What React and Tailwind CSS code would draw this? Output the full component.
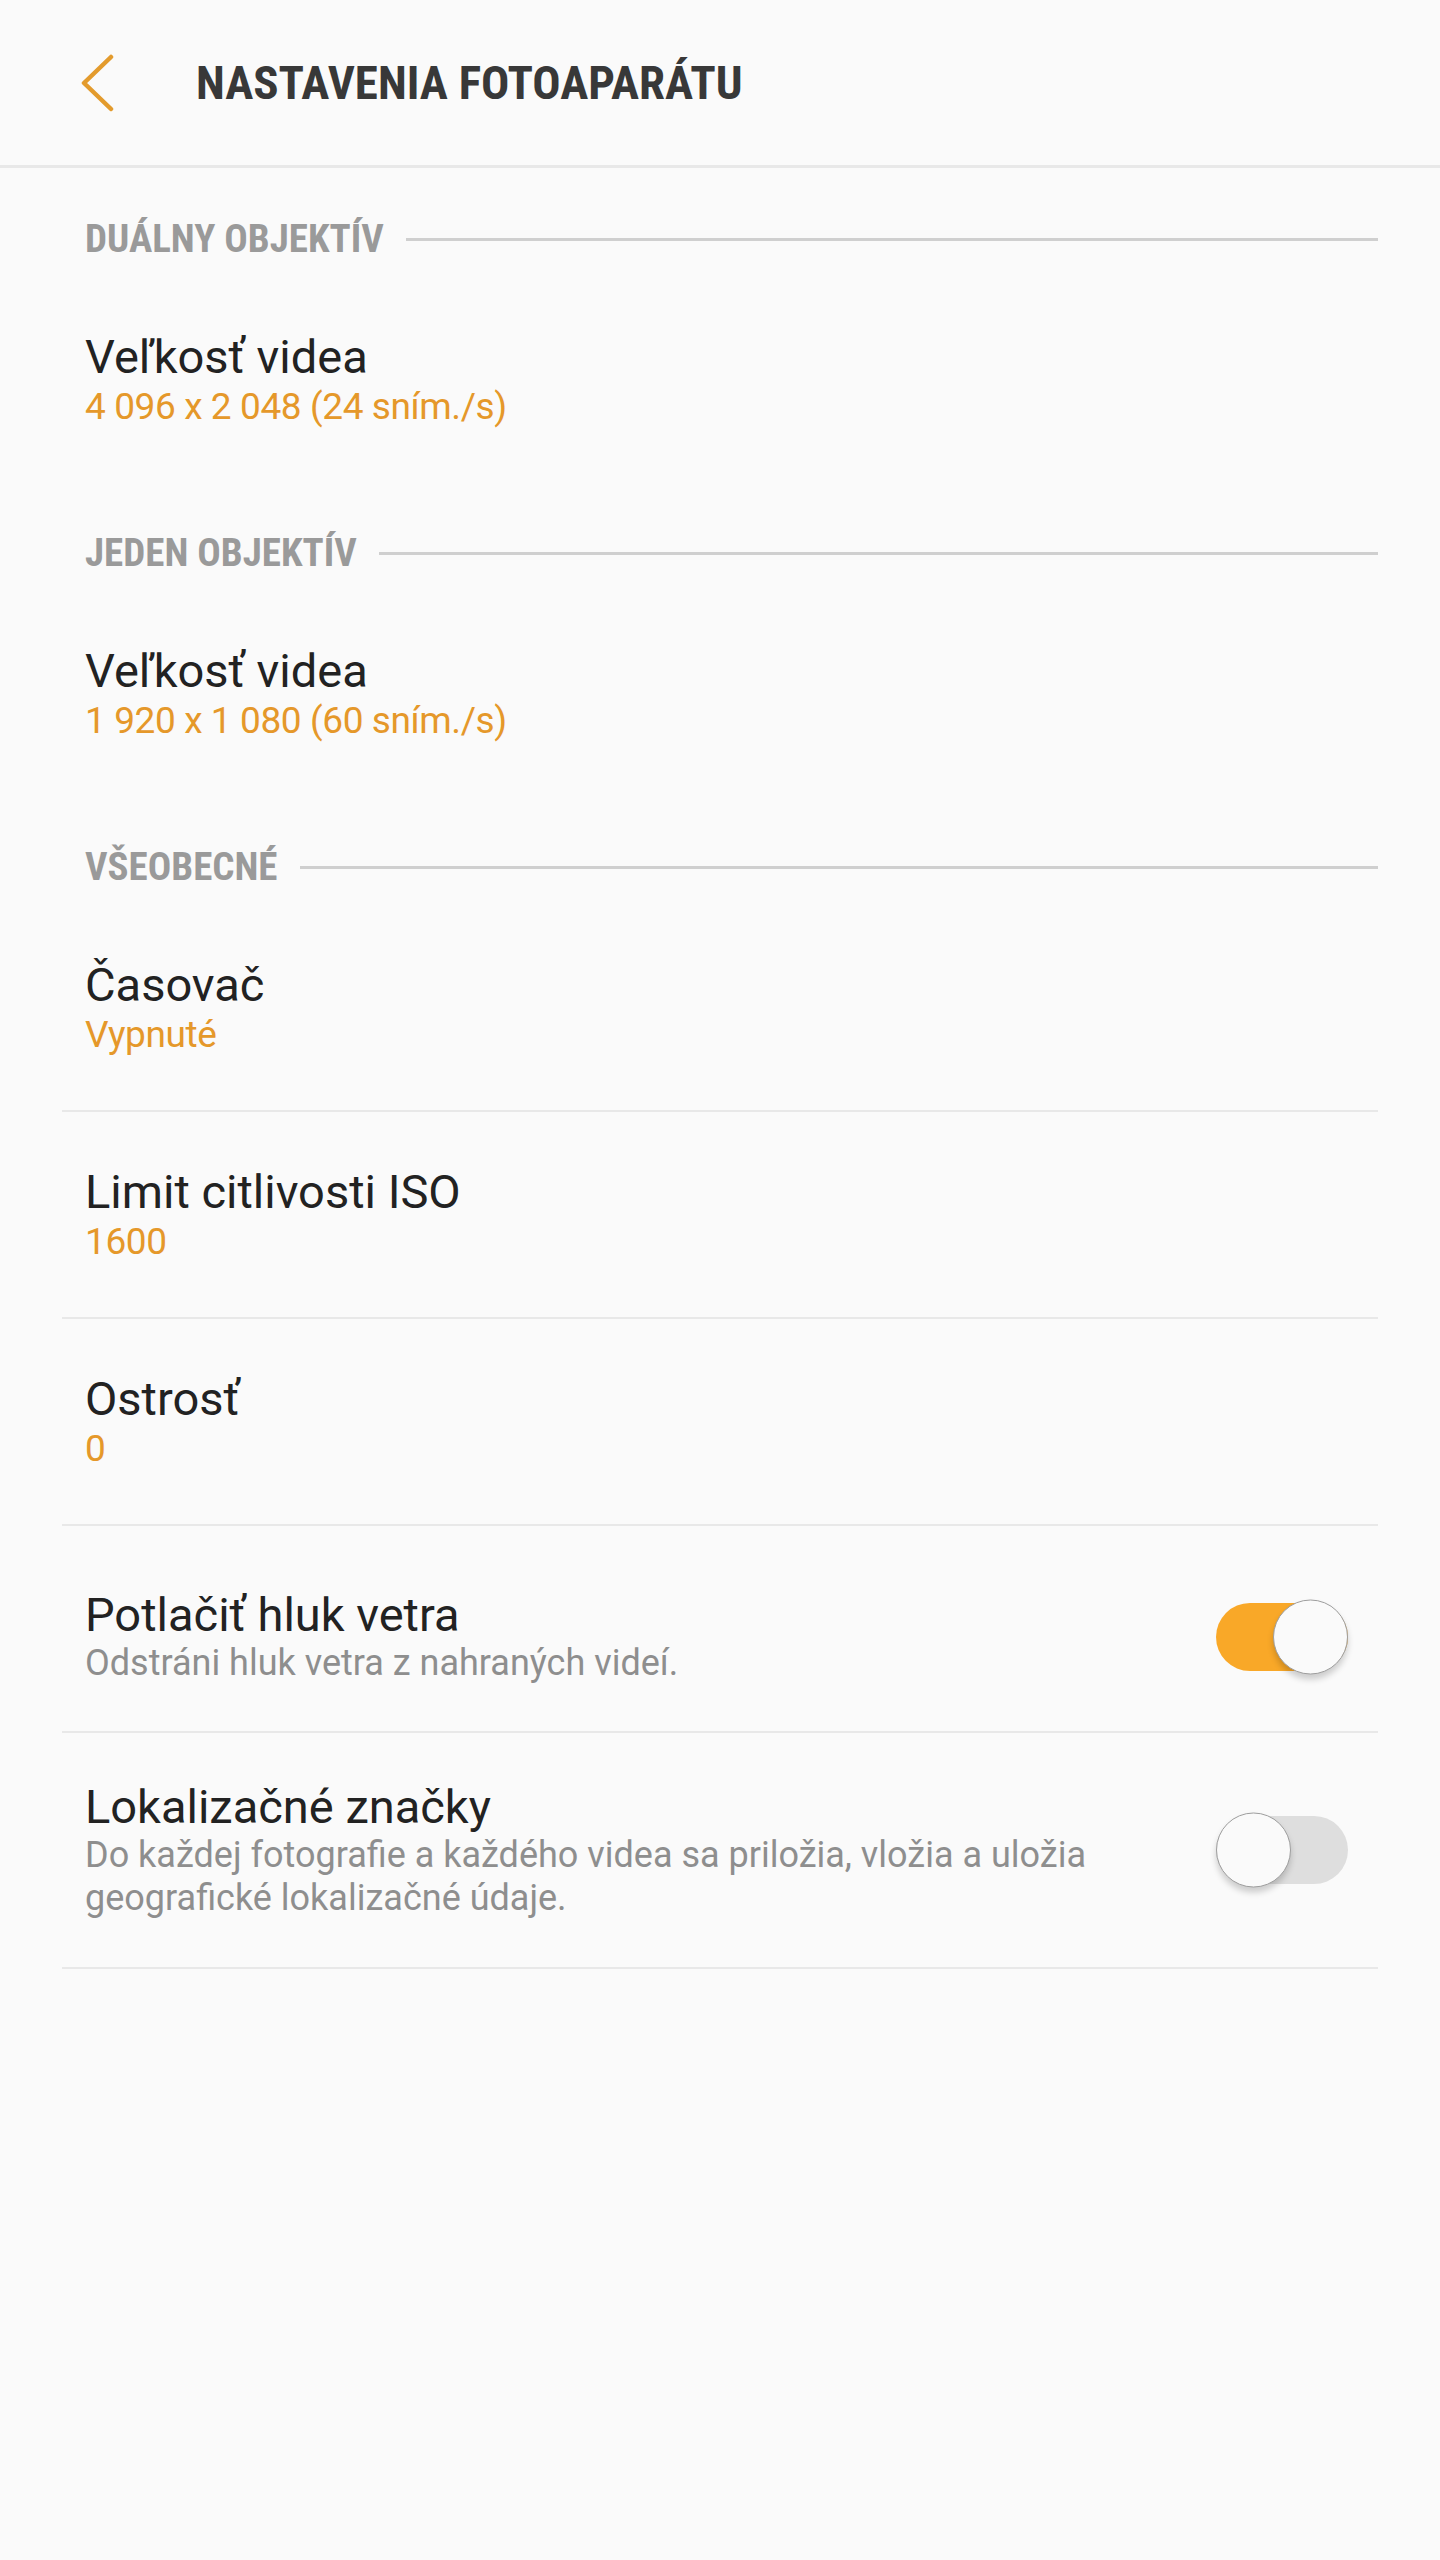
import React from 'react';

const condensed = { fontFamily: '"Roboto Condensed", "Liberation Sans Narrow", "DejaVu Sans Condensed", Roboto, sans-serif' };

function SectionHeader({ label }) {
  return (
    <div className="flex h-[78px] items-center pl-[23px]">
      <span className="text-[39px] font-bold leading-none text-[#9a9a9a] font-stretch-condensed" style={condensed}>
        {label}
      </span>
      <div className="ml-[22px] h-[3px] flex-1 bg-[#cfcfcf]" />
    </div>
  );
}

function Toggle({ on }) {
  return (
    <div className={`relative h-[68px] w-[132px] shrink-0 rounded-full ${on ? 'bg-[#f9a828]' : 'bg-[#dedede]'}`}>
      <div
        className={`absolute top-1/2 h-[75px] w-[75px] -translate-y-1/2 rounded-full border-[1.5px] border-[#9e9e9e] bg-[#fafafa] shadow-[0_5px_6px_rgba(0,0,0,0.18)] ${
          on ? 'right-0' : 'left-0'
        }`}
      />
    </div>
  );
}

function Row({ title, value, desc, toggle, height }) {
  return (
    <div className={`flex items-center justify-between border-b-2 border-[#e8e8e8] pl-[23px] pr-[30px] ${height}`}>
      <div>
        <div className="text-[47px] leading-[54px] text-[#222222]">{title}</div>
        {value && <div className="text-[37px] leading-[46px] tracking-[-0.4px] text-[#e5982a]">{value}</div>}
        {desc && <div className="text-[36px] leading-[43px] text-[#8e8e8e]">{desc}</div>}
      </div>
      {toggle !== undefined && <Toggle on={toggle} />}
    </div>
  );
}

export default function App() {
  return (
    <div className="min-h-[2560px] bg-[#fafafa]" style={{ fontFamily: 'Roboto, "Noto Sans", sans-serif' }}>
      {/* Top bar */}
      <header className="flex h-[168px] items-center border-b-[3px] border-[#e8e8e8]">
        <button className="ml-[80px] flex h-[60px] w-[36px] items-center">
          <svg width="34" height="58" viewBox="0 0 34 58" fill="none">
            <path d="M31 3 L4 29 L31 55" stroke="#e39b2d" strokeWidth="4.5" strokeLinecap="round" strokeLinejoin="round" />
          </svg>
        </button>
        <h1 className="ml-[80px] text-[47px] font-bold leading-none text-[#383838] font-stretch-condensed" style={condensed}>
          NASTAVENIA FOTOAPARÁTU
        </h1>
      </header>

      <main className="px-[62px] pt-[32px]">
        <SectionHeader label="DUÁLNY OBJEKTÍV" />
        <div className="pb-[84px] pl-[23px] pt-[52px]">
          <div className="text-[47px] leading-[54px] text-[#222222]">Veľkosť videa</div>
          <div className="text-[37px] leading-[46px] tracking-[-0.4px] text-[#e5982a]">4 096 x 2 048 (24 sním./s)</div>
        </div>

        <SectionHeader label="JEDEN OBJEKTÍV" />
        <div className="pb-[84px] pl-[23px] pt-[52px]">
          <div className="text-[47px] leading-[54px] text-[#222222]">Veľkosť videa</div>
          <div className="text-[37px] leading-[46px] tracking-[-0.4px] text-[#e5982a]">1 920 x 1 080 (60 sním./s)</div>
        </div>

        <SectionHeader label="VŠEOBECNÉ" />
        <Row title="Časovač" value="Vypnuté" height="h-[206px]" />
        <Row title="Limit citlivosti ISO" value="1600" height="h-[207px]" />
        <Row title="Ostrosť" value="0" height="h-[207px]" />
        <Row
          title="Potlačiť hluk vetra"
          desc="Odstráni hluk vetra z nahraných videí."
          toggle={true}
          height="h-[207px] pt-[16px]"
        />
        <Row
          title="Lokalizačné značky"
          desc={
            <>
              Do každej fotografie a každého videa sa priložia, vložia a uložia
              <br />
              geografické lokalizačné údaje.
            </>
          }
          toggle={false}
          height="h-[236px]"
        />
      </main>
    </div>
  );
}
